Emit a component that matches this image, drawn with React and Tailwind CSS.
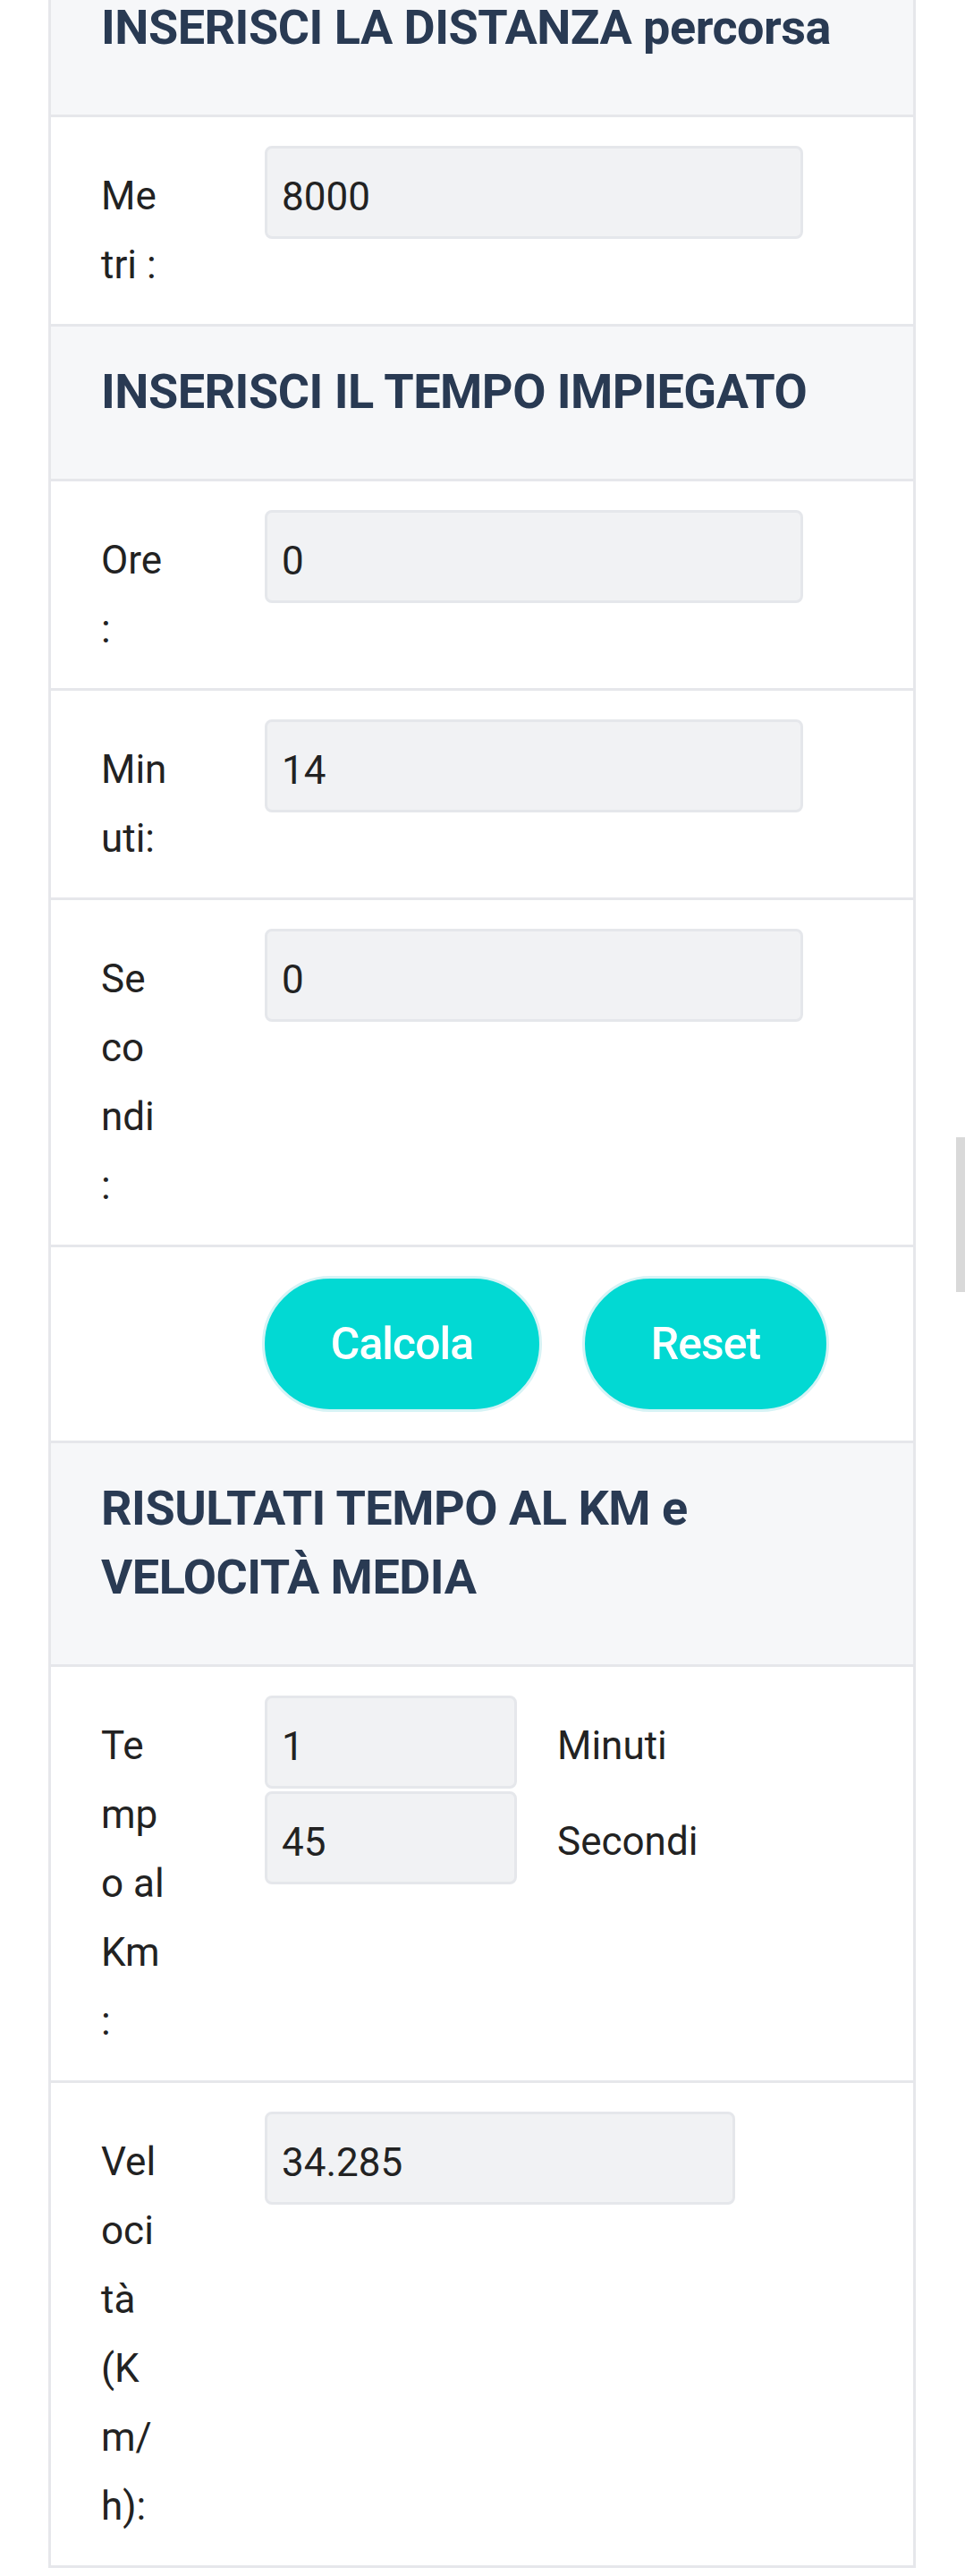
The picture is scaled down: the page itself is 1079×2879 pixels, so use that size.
import React from "react";

const heading = "font-['Roboto',sans-serif] font-bold text-[54px] leading-[77px] tracking-[-0.5px] text-[#293a53] whitespace-nowrap";
const btn = "h-[152px] rounded-full border-[3px] border-[#d6f3f5] bg-[#02d9d3] text-[50px] font-medium tracking-[-1px] text-white font-['Roboto',sans-serif]";

const Header = ({ lines }) => (
  <div className="bg-[#f6f7f9] border-b-[3px] border-[#e6e7eb] pl-[56px] pt-[34px] pb-[59px]">
    {lines.map((l) => (
      <div key={l} className={heading}>{l}</div>
    ))}
  </div>
);

const Field = ({ value, width }) => (
  <input
    readOnly
    value={value}
    style={{ width }}
    className="block h-[104px] rounded-[8px] border-[3px] border-[#e5e7eb] bg-[#f1f2f4] pl-[16px] pt-[10px] text-[44px] text-[#222] outline-none font-['Roboto',sans-serif]"
  />
);

const Row = ({ label, children }) => (
  <div className="flex border-b-[3px] border-[#e6e7eb] pt-[32px]">
    <div className="w-[239px] shrink-0 pl-[56px] pt-[18px] pb-[27px] text-[44px] leading-[77px] text-[#222]">
      {label.map((l, i) => (
        <div key={i} className="whitespace-pre">{l}</div>
      ))}
    </div>
    <div>{children}</div>
  </div>
);

export default function App() {
  return (
    <div className="relative w-[1079px] h-[2879px] overflow-hidden bg-white font-['Roboto',sans-serif]">
      <div className="ml-[54px] mt-[-42px] w-[970px] border-x-[3px] border-[#e6e7eb]">
        <Header lines={["INSERISCI LA DISTANZA percorsa"]} />
        <Row label={["Me", "tri :"]}>
          <Field value="8000" width={602} />
        </Row>

        <Header lines={["INSERISCI IL TEMPO IMPIEGATO"]} />
        <Row label={["Ore", ":"]}>
          <Field value="0" width={602} />
        </Row>
        <Row label={["Min", "uti:"]}>
          <Field value="14" width={602} />
        </Row>
        <Row label={["Se", "co", "ndi", ":"]}>
          <Field value="0" width={602} />
        </Row>

        <div className="flex gap-[45px] border-b-[3px] border-[#e6e7eb] pl-[236px] pt-[32px] pb-[32px]">
          <button className={`${btn} w-[313px]`}>Calcola</button>
          <button className={`${btn} w-[276px]`}>Reset</button>
        </div>

        <Header lines={["RISULTATI TEMPO AL KM e", "VELOCITÀ MEDIA"]} />
        <Row label={["Te", "mp", "o al", "Km", ":"]}>
          <div className="flex flex-col gap-[3px]">
            <div className="flex items-center gap-[45px]">
              <Field value="1" width={282} />
              <span className="pt-[8px] text-[44px] text-[#222]">Minuti</span>
            </div>
            <div className="flex items-center gap-[45px]">
              <Field value="45" width={282} />
              <span className="pt-[8px] text-[44px] text-[#222]">Secondi</span>
            </div>
          </div>
        </Row>
        <Row label={["Vel", "oci", "tà", "(K", "m/", "h):"]}>
          <Field value="34.285" width={526} />
        </Row>
      </div>

      <div className="absolute right-0 top-[1271px] h-[173px] w-[10px] bg-[#d9d9d9]" />
    </div>
  );
}
